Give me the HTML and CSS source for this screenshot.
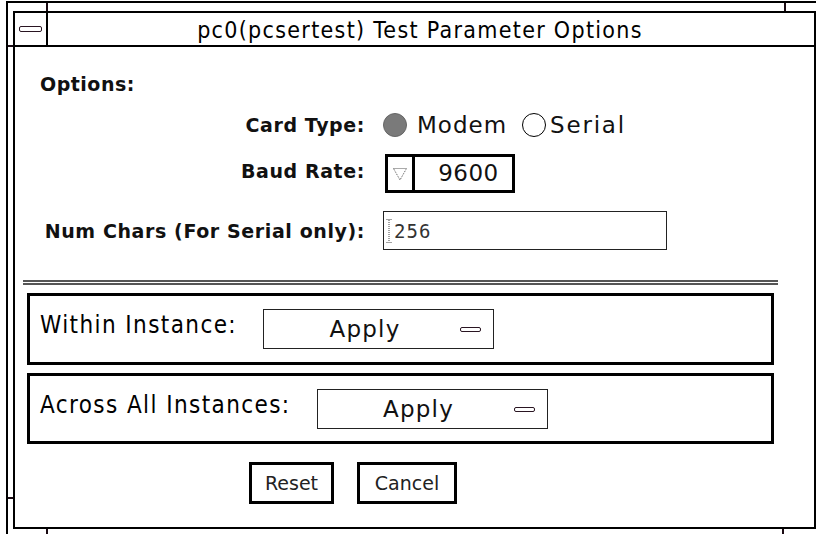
FILE: index.html
```html
<!DOCTYPE html>
<html>
<head>
	<meta name="viewport" content="width=device-width, initial-scale=1.0">
	<title>pc0(pcsertest) Test Parameter Options</title>
	<link rel="stylesheet" href="styles.css">
</head>
<body>

	<div class="frame">
		<div class="tick tick-top" id="tickTopLeft"></div>
		<div class="tick tick-top" id="tickTopRight"></div>
		<div class="tick tick-side" id="tickSideTop"></div>
		<div class="tick tick-side" id="tickSideBottom"></div>
		<div class="tick tick-bottom" id="tickBottomLeft"></div>
		<div class="tick tick-bottom" id="tickBottomRight"></div>

		<div class="window">
			<div class="titlebar">
				<div class="menu-box"><span class="minus"></span></div>
				<div class="title-text">pc0(pcsertest) Test Parameter Options</div>
			</div>

			<div class="content">
				<p class="options-title">Options:</p>

				<div class="form">
					<div class="label">Card Type:</div>
					<div class="radios">
						<span class="radio radio-on"></span>
						<span class="radio-text">Modem</span>
						<span class="radio radio-off"></span>
						<span class="radio-text radio-text-last">Serial</span>
					</div>

					<div class="label label-baud">Baud Rate:</div>
					<div class="baud">
						<div class="baud-arrow">
							<svg width="16" height="16" viewBox="0 0 16 16">
								<path d="M1.5 2.5 H14.5 L8 14 Z" fill="none" stroke="#555" stroke-width="1" stroke-dasharray="1 1"/>
							</svg>
						</div>
						<div class="baud-value">9600</div>
					</div>

					<div class="label num-row">Num Chars (For Serial only):</div>
					<div class="text-field num-row">
						<svg class="caret" width="6" height="24" viewBox="0 0 6 24">
							<path d="M0.5 0.5 H5.5 M3 1 V23 M0.5 23.5 H5.5" fill="none" stroke="#444" stroke-width="1" stroke-dasharray="1 1"/>
						</svg>
						<span class="field-value">256</span>
					</div>
				</div>

				<div class="separator"></div>

				<div class="apply-box">
					<div class="apply-label">Within Instance:</div>
					<div class="apply-button">
						<span class="apply-text">Apply</span>
						<span class="minus minus-apply"></span>
					</div>
				</div>

				<div class="apply-box apply-box-second">
					<div class="apply-label">Across All Instances:</div>
					<div class="apply-button">
						<span class="apply-text">Apply</span>
						<span class="minus minus-apply"></span>
					</div>
				</div>

				<div class="buttons">
					<div class="push-button" id="resetButton">Reset</div>
					<div class="push-button" id="cancelButton">Cancel</div>
				</div>
			</div>
		</div>
	</div>

</body>
</html>
```

FILE: styles.css
```css
body{
	margin: 0;
	background-color: #fff;
	overflow: hidden;
	font-family: "DejaVu Sans", "Liberation Sans", sans-serif;
	color: #111;
}

/* outer resize frame */
.frame{
	position: relative;
	margin: 1px 0 0 6px;
	width: 830px;
	height: 545px;
	border: 2px solid #000;
	padding: 8px 0 0 5px;
}

.tick{
	position: absolute;
	background-color: #1a0a12;
}

.tick-top{
	top: 0;
	width: 2px;
	height: 8px;
}

#tickTopLeft{ left: 38px; }
#tickTopRight{ left: 776px; }

.tick-side{
	left: 0;
	width: 5px;
	height: 2px;
}

#tickSideTop{ top: 42px; }
#tickSideBottom{ top: 494px; }

.tick-bottom{
	top: 526px;
	width: 2px;
	height: 12px;
}

#tickBottomLeft{ left: 38px; }
#tickBottomRight{ left: 774px; }

.window{
	width: 799px;
	height: 514px;
	border: 2px solid #000;
	background-color: #fff;
}

/* title bar */
.titlebar{
	display: flex;
	height: 32px;
	border-bottom: 2px solid #000;
}

.menu-box{
	width: 31px;
	border-right: 2px solid #000;
	display: flex;
	align-items: center;
	justify-content: center;
}

.minus{
	display: inline-block;
	width: 21px;
	height: 4px;
	border: 1.5px solid #2a1522;
	border-radius: 2px;
	background-color: #fff;
}

.title-text{
	flex: 1;
	text-align: center;
	padding-right: 22px;
	font-family: "DejaVu Sans Condensed", "Liberation Sans Narrow", "Liberation Sans", sans-serif;
	font-stretch: condensed;
	font-size: 23px;
	letter-spacing: 1.3px;
	line-height: 34px;
	color: #000;
}

/* options */
.options-title{
	margin: 0;
	padding: 26px 0 0 25px;
	font-size: 19px;
	font-weight: bold;
	letter-spacing: 0.5px;
	line-height: 22px;
}

.form{
	display: grid;
	grid-template-columns: 325px auto;
	column-gap: 18px;
	row-gap: 15px;
	align-items: center;
	margin: 16px 0 0 25px;
}

.label{
	text-align: right;
	font-size: 19px;
	font-weight: bold;
	letter-spacing: 0.6px;
	white-space: nowrap;
}

.label-baud{
	margin-top: -5px;
}

.num-row{
	margin-top: 3px;
}

.radios{
	display: flex;
	align-items: center;
	height: 28px;
}

.radio{
	display: inline-block;
	width: 24px;
	height: 24px;
	border-radius: 50%;
	box-sizing: border-box;
}

.radio-on{
	background-color: #7a7a7a;
	border: 1px solid #666;
}

.radio-off{
	background-color: #fff;
	border: 1.5px solid #000;
	margin-left: 15px;
}

.radio-text{
	font-size: 23px;
	letter-spacing: 1px;
	margin-left: 10px;
}

.radio-text-last{
	margin-left: 4px;
	letter-spacing: 1.8px;
}

.baud{
	display: flex;
	width: 130px;
	height: 39px;
	box-sizing: border-box;
	border: 3px solid #000;
	margin-left: 2px;
}

.baud-arrow{
	width: 24px;
	border-right: 3px solid #000;
	display: flex;
	align-items: center;
	justify-content: center;
}

.baud-value{
	flex: 1;
	text-align: center;
	padding-left: 10px;
	font-size: 23px;
	letter-spacing: 0.5px;
	line-height: 33px;
}

.text-field{
	display: flex;
	align-items: center;
	width: 284px;
	height: 39px;
	box-sizing: border-box;
	border: 1px solid #222;
	padding-left: 2px;
}

.field-value{
	font-family: "DejaVu Sans Mono", "Liberation Mono", monospace;
	font-size: 19px;
	color: #333;
	margin-left: 2px;
	letter-spacing: 1px;
}

/* double line */
.separator{
	margin: 30px 0 0 8px;
	width: 755px;
	height: 1px;
	border-top: 2px solid #555;
	border-bottom: 2px solid #555;
}

.apply-box{
	display: flex;
	align-items: flex-start;
	width: 747px;
	height: 72px;
	box-sizing: border-box;
	border: 3px solid #000;
	margin: 8px 0 0 12px;
	padding: 13px 0 0 10px;
}

.apply-box-second{
	height: 71px;
}

.apply-label{
	margin-top: 3px;
	font-family: "DejaVu Sans Condensed", "Liberation Sans Narrow", "Liberation Sans", sans-serif;
	font-stretch: condensed;
	font-size: 24px;
	letter-spacing: 1.4px;
	line-height: 26px;
	color: #000;
}

.apply-button{
	display: flex;
	align-items: center;
	width: 231px;
	height: 40px;
	box-sizing: border-box;
	border: 1px solid #222;
	margin-left: 26px;
	padding-right: 12px;
}

.apply-text{
	flex: 1;
	text-align: center;
	font-size: 23px;
	letter-spacing: 1.2px;
	padding-left: 6px;
}

.minus-apply{
	width: 19px;
	height: 3px;
}

/* bottom buttons */
.buttons{
	display: flex;
	gap: 23px;
	margin: 18px 0 0 234px;
}

.push-button{
	height: 42px;
	box-sizing: border-box;
	border: 3px solid #000;
	font-size: 19px;
	line-height: 36px;
	color: #222;
	text-align: center;
}

#resetButton{
	width: 85px;
}

#cancelButton{
	width: 100px;
}
```
